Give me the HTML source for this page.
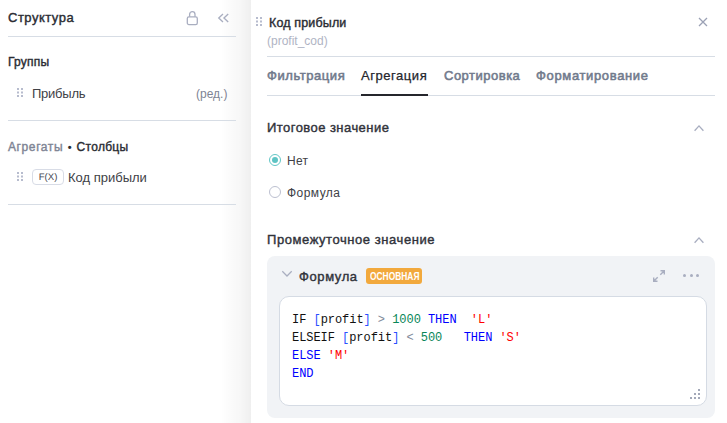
<!DOCTYPE html>
<html><head><meta charset="utf-8">
<style>
*{box-sizing:border-box;margin:0;padding:0}
html,body{width:727px;height:423px;overflow:hidden;background:#fff;font-family:"Liberation Sans",sans-serif;color:#2a2c33}
.abs{position:absolute;white-space:nowrap}
.shadow{position:absolute;left:221px;top:0;width:30px;height:423px;background:linear-gradient(to right,rgba(0,0,0,0),rgba(0,0,0,0.012) 20%,rgba(0,0,0,0.032) 63%,rgba(0,0,0,0.062))}
.right{position:absolute;left:251px;top:0;width:476px;height:423px;background:#fff}
.hr{position:absolute;height:1px;background:#d7dde5}
.b{font-weight:bold}
.sb{-webkit-text-stroke:0.4px currentColor}
.dots{position:absolute;width:6px;height:10px}
.dots i{position:absolute;width:2px;height:2px;background:#b9bdcf}
.tab{position:absolute;top:68px;font-size:13px;-webkit-text-stroke:0.55px currentColor;color:#717a8c;white-space:nowrap}
.code{font-family:"Liberation Mono",monospace;font-size:12px;letter-spacing:-0.05px;line-height:18px;color:#111}
.code div{white-space:pre}
.kw{color:#0000ff}
.num{color:#098658}
.str{color:#ff0000}
.br{color:#2a4fff}
.op{color:#7f8a9a}
.grip i{position:absolute;width:2px;height:2px;background:#a3a8b8}
</style></head><body>
<div class="shadow"></div>

<!-- LEFT PANEL -->
<div class="abs sb" style="left:8px;top:10px;font-size:13px;letter-spacing:0.5px;color:#2a2c33">Структура</div>
<svg class="abs" style="left:185px;top:10px" width="14" height="16" viewBox="0 0 14 16"><rect x="2.3" y="6.8" width="10" height="7.8" rx="1.6" fill="none" stroke="#a9aec0" stroke-width="1.3"/><path d="M4.6 6.8V4.4a2.7 2.7 0 0 1 5.4 0v2.4" fill="none" stroke="#a9aec0" stroke-width="1.3"/></svg>
<svg class="abs" style="left:216px;top:11px" width="15" height="14" viewBox="0 0 15 14"><path d="M7 2.9L2.75 7L7 11.1M12.2 2.9L7.95 7L12.2 11.1" fill="none" stroke="#a9aec0" stroke-width="1.35"/></svg>
<div class="hr" style="left:8px;top:36px;width:228px"></div>

<div class="abs sb" style="left:8px;top:54.5px;font-size:12px;letter-spacing:0.25px">Группы</div>
<svg class="abs" style="left:17px;top:88px" width="6" height="9" viewBox="0 0 6 9"><g fill="#b7bcce"><rect x="0" y="0" width="2" height="2"/><rect x="4" y="0" width="2" height="2"/><rect x="0" y="3.5" width="2" height="2"/><rect x="4" y="3.5" width="2" height="2"/><rect x="0" y="7" width="2" height="2"/><rect x="4" y="7" width="2" height="2"/></g></svg>
<div class="abs" style="left:32px;top:86px;font-size:13px;letter-spacing:-0.25px;color:#404146">Прибыль</div>
<div class="abs" style="left:196px;top:87px;font-size:12px;color:#7e8494">(ред.)</div>
<div class="hr" style="left:8px;top:120px;width:228px"></div>

<div class="abs" style="left:8px;top:139.5px;font-size:12px"><span class="sb" style="color:#7e8494;letter-spacing:0.6px">Агрегаты</span><span class="b" style="margin:0 0 0 4.5px;font-size:11px">•</span><span class="sb" style="margin-left:5px;letter-spacing:0.3px">Столбцы</span></div>
<svg class="abs" style="left:17px;top:172px" width="6" height="9" viewBox="0 0 6 9"><g fill="#b7bcce"><rect x="0" y="0" width="2" height="2"/><rect x="4" y="0" width="2" height="2"/><rect x="0" y="3.5" width="2" height="2"/><rect x="4" y="3.5" width="2" height="2"/><rect x="0" y="7" width="2" height="2"/><rect x="4" y="7" width="2" height="2"/></g></svg>
<div class="abs" style="left:32px;top:169px;width:32px;height:16px;border:1px solid #d8dce6;border-radius:4px;"><svg style="position:absolute;left:0;top:0" width="30" height="14"><text x="15" y="9.9" text-anchor="middle" font-family="Liberation Sans" font-size="9.6" fill="#44474f" text-rendering="geometricPrecision">F(X)</text></svg></div>
<div class="abs" style="left:68px;top:170px;font-size:13px;color:#404146">Код прибыли</div>
<div class="hr" style="left:8px;top:204px;width:228px"></div>

<!-- RIGHT PANEL -->
<div class="right"></div>
<svg class="abs" style="left:256px;top:17px" width="6" height="9" viewBox="0 0 6 9"><g fill="#b7bcce"><rect x="0" y="0" width="2" height="2"/><rect x="4" y="0" width="2" height="2"/><rect x="0" y="3.5" width="2" height="2"/><rect x="4" y="3.5" width="2" height="2"/><rect x="0" y="7" width="2" height="2"/><rect x="4" y="7" width="2" height="2"/></g></svg>
<div class="abs sb" style="left:269px;top:16px;font-size:12.5px;letter-spacing:0.15px">Код прибыли</div>
<div class="abs" style="left:267px;top:34px;font-size:12px;color:#b0b4c4">(profit_cod)</div>
<svg class="abs" style="left:698px;top:17px" width="10" height="10" viewBox="0 0 10 10"><path d="M1 1L9 9M9 1L1 9" stroke="#9ba1b5" stroke-width="1.3"/></svg>
<div class="hr" style="left:267px;top:56px;width:448px"></div>

<div class="tab sb" style="left:267px;letter-spacing:0.56px">Фильтрация</div>
<div class="tab" style="left:361px;color:#25262c;font-weight:normal;letter-spacing:0.55px;-webkit-text-stroke:0.25px #25262c">Агрегация</div>
<div class="tab sb" style="left:444px;letter-spacing:0.5px">Сортировка</div>
<div class="tab sb" style="left:536px;letter-spacing:0.65px">Форматирование</div>
<div class="hr" style="left:267px;top:95px;width:448px"></div>
<div class="abs" style="left:361px;top:94px;width:67px;height:2px;background:#25262c"></div>

<div class="abs sb" style="left:267px;top:120px;font-size:13px;letter-spacing:0.45px;color:#30323a">Итоговое значение</div>
<svg class="abs" style="left:692px;top:122px" width="14" height="11" viewBox="0 0 14 11"><path d="M2.6 8.8L7 3.9L11.4 8.8" fill="none" stroke="#a9aec0" stroke-width="1.35"/></svg>

<div class="abs" style="left:269px;top:154px;width:12px;height:12px;border-radius:50%;border:1.2px solid #62c6c6"></div>
<div class="abs" style="left:272px;top:157px;width:6px;height:6px;border-radius:50%;background:#5ec4c4"></div>
<div class="abs" style="left:287px;top:154px;font-size:12px;letter-spacing:0.3px;color:#404146">Нет</div>

<div class="abs" style="left:269px;top:186px;width:12px;height:12px;border-radius:50%;border:1px solid #bcc0d0"></div>
<div class="abs" style="left:287px;top:186px;font-size:12px;letter-spacing:0.45px;color:#404146">Формула</div>

<div class="abs sb" style="left:267px;top:232px;font-size:13px;letter-spacing:0.56px;color:#30323a">Промежуточное значение</div>
<svg class="abs" style="left:692px;top:234px" width="14" height="11" viewBox="0 0 14 11"><path d="M2.6 8.8L7 3.9L11.4 8.8" fill="none" stroke="#a9aec0" stroke-width="1.35"/></svg>

<div class="abs" style="left:267px;top:256px;width:448px;height:162px;background:#f1f3f6;border-radius:8px"></div>
<svg class="abs" style="left:281px;top:269px" width="12" height="9" viewBox="0 0 12 9"><path d="M1.3 2.3L6 7L10.7 2.3" fill="none" stroke="#a9aec0" stroke-width="1.25"/></svg>
<div class="abs sb" style="left:299px;top:269px;font-size:13px;letter-spacing:0.6px;color:#30323a">Формула</div>
<div class="abs" style="left:366px;top:268px;width:56px;height:16px;background:#f2a93d;border-radius:3px"></div>
<div class="abs b" style="left:369.5px;top:271px;font-size:10px;line-height:12px;color:#fff;transform:scaleX(0.84);transform-origin:0 0">ОСНОВНАЯ</div>
<svg class="abs" style="left:652px;top:269px" width="14" height="14" viewBox="0 0 14 14"><path d="M8.3 5.7L12.3 1.7M8.5 1.7H12.3V5.5M5.7 8.3L1.7 12.3M1.7 8.5V12.3H5.5" fill="none" stroke="#a9aec0" stroke-width="1.4"/></svg>
<div class="abs" style="left:683px;top:274px"><i style="position:absolute;left:0;top:0;width:3px;height:3px;border-radius:50%;background:#a9aec0"></i><i style="position:absolute;left:6.5px;top:0;width:3px;height:3px;border-radius:50%;background:#a9aec0"></i><i style="position:absolute;left:13px;top:0;width:3px;height:3px;border-radius:50%;background:#a9aec0"></i></div>

<div class="abs" style="left:279px;top:296px;width:428px;height:110px;background:#fff;border:1px solid #d5dbe4;border-radius:10px"></div>
<div class="abs code" style="left:292px;top:310.5px">
<div>IF <span class="br">[</span>profit<span class="br">]</span> <span class="op">&gt;</span> <span class="num">1000</span> <span class="kw">THEN</span>  <span class="str">'L'</span></div>
<div>ELSEIF <span class="br">[</span>profit<span class="br">]</span> <span class="op">&lt;</span> <span class="num">500</span>   <span class="kw">THEN</span> <span class="str">'S'</span></div>
<div><span class="kw">ELSE</span> <span class="str">'M'</span></div>
<div><span class="kw">END</span></div>
</div>
<div class="grip"><i style="left:698px;top:389px"></i><i style="left:694px;top:393px"></i><i style="left:698px;top:393px"></i><i style="left:690px;top:397px"></i><i style="left:694px;top:397px"></i><i style="left:698px;top:397px"></i></div>
</body></html>
